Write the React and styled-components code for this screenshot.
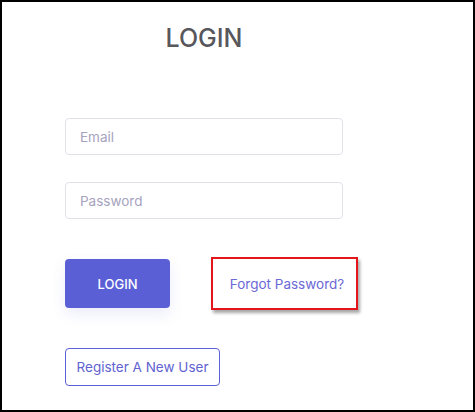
import React from "react";
import styled, { createGlobalStyle } from "styled-components";

const Global = createGlobalStyle`
  html, body { margin: 0; padding: 0; background: #fff; }
  * { box-sizing: border-box; }
  body { font-family: "Inter", "Liberation Sans", sans-serif; }
`;

const Frame = styled.div`
  width: 475px;
  height: 412px;
  border: 2px solid #000;
  background: #fff;
  padding-left: 63px;
`;

const Form = styled.form`
  width: 278px;
  display: flex;
  flex-direction: column;
  align-items: flex-start;
`;

const Title = styled.h1`
  align-self: stretch;
  margin: 20px 0 0;
  text-align: center;
  font-size: 25px;
  line-height: 32px;
  font-weight: 500;
  color: #57575c;
  letter-spacing: 0;
`;

const Field = styled.input`
  width: 100%;
  height: 37px;
  margin-top: ${(p) => p.$top}px;
  border: 1px solid #e1e0ea;
  border-radius: 4px;
  padding: 0 14px;
  font-family: inherit;
  font-size: 13.5px;
  color: #444;
  outline: none;
  &::placeholder { color: #a6a3be; }
`;

const Actions = styled.div`
  margin-top: 38px;
  display: flex;
  align-items: center;
  gap: 41px;
`;

const PrimaryButton = styled.button`
  width: 105px;
  height: 49px;
  border: none;
  border-radius: 4px;
  background: #5a5fd6;
  color: #fff;
  font-family: inherit;
  font-size: 13px;
  font-weight: 500;
  box-shadow: 0 6px 14px rgba(90, 95, 214, 0.12);
`;

const ForgotBox = styled.a`
  width: 147px;
  height: 53px;
  border: 2px solid #e3161c;
  box-shadow: 2px 3px 3px rgba(0, 0, 0, 0.35);
  display: flex;
  align-items: center;
  justify-content: center;
  color: #6c68d6;
  font-size: 13.5px;
  text-decoration: none;
  padding-left: 5px;
`;

const OutlineButton = styled.button`
  margin-top: 38px;
  width: 155px;
  height: 38px;
  border: 1px solid #5a5fd6;
  border-radius: 4px;
  background: #fff;
  color: #6163d0;
  font-family: inherit;
  font-size: 13.5px;
`;

export default function App() {
  return (
    <>
      <Global />
      <Frame>
        <Form onSubmit={(e) => e.preventDefault()}>
          <Title>LOGIN</Title>
          <Field $top={64} type="email" placeholder="Email" />
          <Field $top={27} type="password" placeholder="Password" />
          <Actions>
            <PrimaryButton type="submit">LOGIN</PrimaryButton>
            <ForgotBox href="#">Forgot Password?</ForgotBox>
          </Actions>
          <OutlineButton type="button">Register A New User</OutlineButton>
        </Form>
      </Frame>
    </>
  );
}
